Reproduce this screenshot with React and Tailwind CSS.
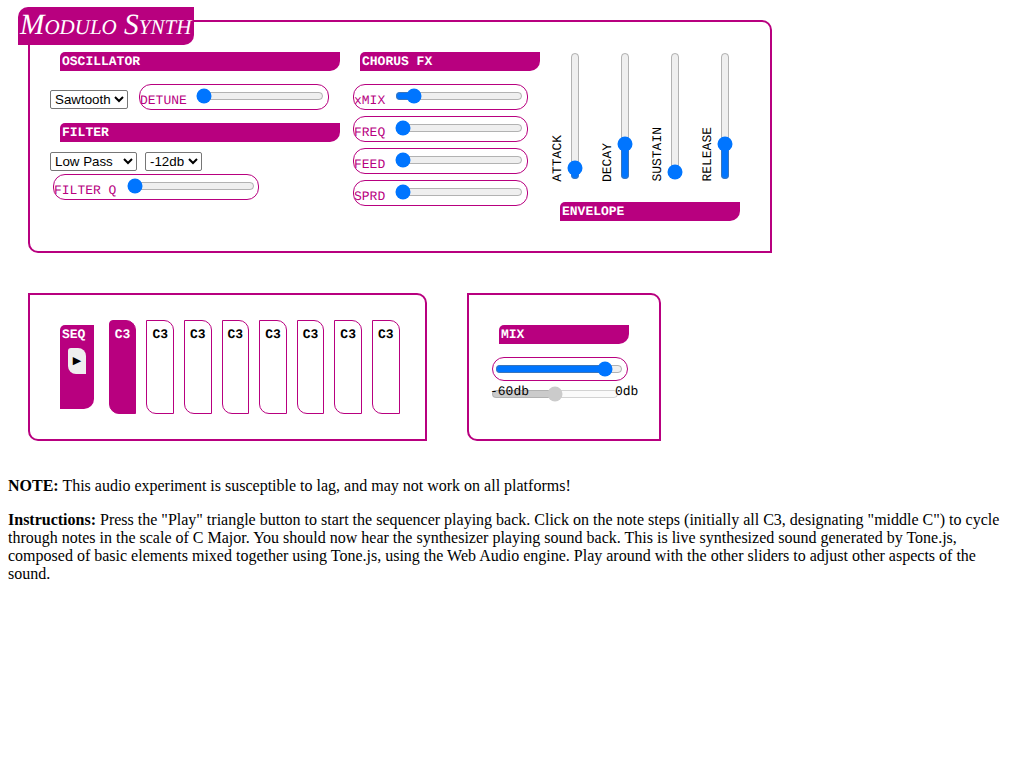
import React from 'react'

const Header = ({ title, className }) => (
  <div className={`h-[19px] pl-[2px] bg-[#b8007f] rounded-tl-[5px] rounded-br-[10px] text-white text-[13px] leading-[19px] font-bold ${className}`}>
    {title}
  </div>
)

// pill around a label and a horizontal slider
const SliderBox = ({ label, gap, value, className }) => (
  <div className={`flex h-[26px] border border-[#b8007f] rounded-[12px] text-[#b8007f] text-[13px] ${className}`}>
    <span className="mt-[8px] leading-[15px] whitespace-pre">{label}</span>
    <input type="range" step="0.1" defaultValue={value} className={`${gap} mt-[3px] h-4 w-[128px] shrink-0`} />
  </div>
)

const VerticalSlider = ({ label, value }) => (
  <div className="flex w-[50px] items-end h-[130px]">
    <span className="ml-[1px] [writing-mode:vertical-rl] rotate-180 text-[13px] leading-[14px] w-[14px] text-black">{label}</span>
    <input
      type="range"
      step="0.1"
      defaultValue={value}
      className="ml-[2px] mb-[2px] w-4 h-[128px] [writing-mode:vertical-lr] [direction:rtl]"
    />
  </div>
)

const Step = ({ active }) => (
  <div className={`w-[27.6px] h-[94px] shrink-0 border border-[#b8007f] rounded-tr-[10px] rounded-bl-[10px] text-center text-[13px] font-bold leading-[15px] pt-[6px] ${active ? 'bg-[#b8007f] text-white rounded-tl-[4px]' : 'text-black'}`}>
    C3
  </div>
)

const selectClass = "h-[19px] border border-[#767676] rounded-[2px] bg-white text-[13.33px] text-black font-['Liberation_Sans',sans-serif]"

export default function App() {
  return (
    <div className="min-h-[768px] bg-white pt-[20px] font-['Liberation_Mono',monospace] [text-rendering:geometricPrecision]">
      {/* Main synth panel */}
      <div className="relative ml-[28px] w-[744px] h-[233px] border-2 border-[#b8007f] rounded-tr-[10px] rounded-bl-[10px] flex pt-[30px] pl-[20px]">
        <div className="absolute left-[-12px] top-[-15px] w-[176px] h-[38px] pl-[2px] bg-[#b8007f] rounded-tl-[10px] rounded-br-[10px] text-white font-['Liberation_Serif',serif] italic [font-variant:small-caps] text-[29.33px] leading-[37px] whitespace-nowrap">
          Modulo Synth
        </div>

        <div className="w-[303px] shrink-0">
          <Header title="OSCILLATOR" className="ml-[10px] w-[280px]" />
          <div className="flex mt-[13px]">
            <select className={`${selectClass} w-[78px] mt-[6px]`} defaultValue="Sawtooth">
              <option>Sawtooth</option>
            </select>
            <SliderBox label="DETUNE" gap="ml-[9px]" value={0} className="ml-[11px] w-[190px]" />
          </div>
          <Header title="FILTER" className="ml-[10px] w-[280px] mt-[13px]" />
          <div className="flex mt-[10px] gap-[8px]">
            <select className={`${selectClass} w-[87px]`} defaultValue="Low Pass">
              <option>Low Pass</option>
            </select>
            <select className={`${selectClass} w-[57px]`} defaultValue="-12db">
              <option>-12db</option>
            </select>
          </div>
          <SliderBox label="FILTER Q" gap="ml-[11px]" value={0} className="ml-[3px] mt-[3px] w-[206px]" />
        </div>

        <div className="w-[197px] shrink-0">
          <Header title="CHORUS FX" className="ml-[7px] w-[180px]" />
          <div className="flex flex-col gap-[6px] mt-[13px] w-[175px]">
            <SliderBox label="xMIX" gap="ml-[10px]" value={9.7} />
            <SliderBox label="FREQ" gap="ml-[10px]" value={0} />
            <SliderBox label="FEED" gap="ml-[10px]" value={0} />
            <SliderBox label="SPRD" gap="ml-[10px]" value={0} />
          </div>
        </div>

        <div className="shrink-0">
          <div className="flex">
            <VerticalSlider label="ATTACK" value={3.6} />
            <VerticalSlider label="DECAY" value={25} />
            <VerticalSlider label="SUSTAIN" value={0} />
            <VerticalSlider label="RELEASE" value={25} />
          </div>
          <Header title="ENVELOPE" className="ml-[10px] w-[180px] mt-[20px]" />
        </div>
      </div>

      <div className="flex mt-[40px] ml-[28px]">
        {/* Sequencer panel */}
        <div className="w-[399px] h-[148px] border-2 border-[#b8007f] rounded-tr-[10px] rounded-bl-[10px] flex pt-[25px] pl-[30px]">
          <div className="mt-[5px] w-[34px] h-[84px] pl-[2px] bg-[#b8007f] rounded-tl-[5px] rounded-br-[10px] text-white text-[13px] font-bold leading-[19px] shrink-0">
            SEQ
            <div className="ml-[6px] mt-[4px] w-[18px] h-[26px] bg-[#efefef] rounded-tr-[8px] rounded-bl-[8px] rounded-tl-[3px] text-black text-[11px] font-normal leading-[26px] text-center font-['DejaVu_Sans',sans-serif]">
              ▶
            </div>
          </div>
          <div className="flex gap-[10px] ml-[14.8px]">
            <Step active />
            <Step />
            <Step />
            <Step />
            <Step />
            <Step />
            <Step />
            <Step />
          </div>
        </div>

        {/* Mix panel */}
        <div className="ml-[40px] w-[194px] h-[148px] border-2 border-[#b8007f] rounded-tr-[10px] rounded-bl-[10px] pt-[30px]">
          <Header title="MIX" className="ml-[30px] w-[130px]" />
          <div className="ml-[23px] mt-[13px] w-[136px] h-[24px] border border-[#b8007f] rounded-[12px] flex">
            <input type="range" defaultValue={91} className="ml-[2px] mt-[3px] h-4 w-[128px]" />
          </div>
          <div className="relative ml-[22px] mt-[5px] w-[130px] h-[16px] text-black text-[13px]">
            <input type="range" defaultValue={50} disabled className="block h-4 w-[128px]" />
            <span className="absolute left-[-1px] top-[-2px] leading-[15px]">-60db</span>
            <span className="absolute left-[124px] top-[-2px] leading-[15px]">0db</span>
          </div>
        </div>
      </div>

      {/* Notes */}
      <div className="px-[8px] mt-[36px] font-['Liberation_Serif',serif] text-[16px] leading-[normal] text-black [text-rendering:auto]">
        <p>
          <b>NOTE:</b> This audio experiment is susceptible to lag, and may not work on all platforms!
        </p>
        <p className="mt-[16px]">
          <b>Instructions:</b> Press the "Play" triangle button to start the sequencer playing back. Click on the note steps (initially all C3, designating "middle C") to cycle through notes in the scale of C Major. You should now hear the synthesizer playing sound back. This is live synthesized sound generated by Tone.js, composed of basic elements mixed together using Tone.js, using the Web Audio engine. Play around with the other sliders to adjust other aspects of the sound.
        </p>
      </div>
    </div>
  )
}
